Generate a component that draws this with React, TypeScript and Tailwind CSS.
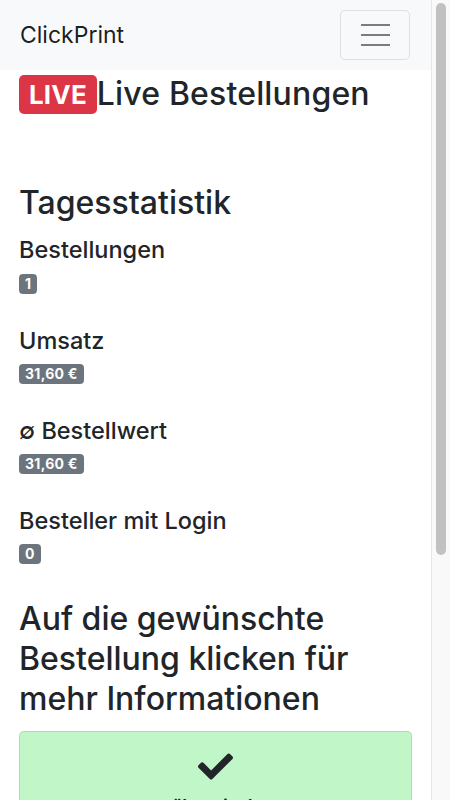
import { FaCheck } from 'react-icons/fa'

// Daily stats shown under "Tagesstatistik"
const stats = [
    { label: 'Bestellungen', value: '1' },
    { label: 'Umsatz', value: '31,60 €' },
    { label: '∅ Bestellwert', value: '31,60 €' },
    { label: 'Besteller mit Login', value: '0' },
]

function Badge({ children }: { children: React.ReactNode }) {
    return (
        <span className="inline-flex items-center h-[20px] px-[6px] rounded-[4px] bg-[#6c757d] text-white text-[14px] tracking-[0.02em] font-bold leading-none">
            {children}
        </span>
    )
}

export default function App() {
    return (
        <div className="h-[800px] flex overflow-hidden bg-white text-[#212529] font-['Inter','Noto_Sans',sans-serif]">
            <div className="flex-1 min-w-0">
                {/* Navbar */}
                <nav className="h-[70px] bg-[#f8f9fa] flex items-center justify-between pl-[20px] pr-[21px]">
                    <span className="text-[23px] leading-none text-[rgba(0,0,0,0.9)]">ClickPrint</span>
                    <button className="w-[70px] h-[50px] border border-[rgba(0,0,0,0.1)] rounded-[5px] flex flex-col items-center justify-center gap-[8px]">
                        <span className="block w-[29px] h-[2px] bg-[rgba(0,0,0,0.5)]" />
                        <span className="block w-[29px] h-[2px] bg-[rgba(0,0,0,0.5)]" />
                        <span className="block w-[29px] h-[2px] bg-[rgba(0,0,0,0.5)]" />
                    </button>
                </nav>

                <main className="px-[19px]">
                    {/* Title */}
                    <h1 className="mt-[5px] flex items-center text-[32px] leading-[1.2] font-medium tracking-[0.005em]">
                        <span className="inline-flex items-center h-[39px] px-[10px] rounded-[5px] bg-[#dc3545] text-white text-[26px] font-bold leading-none">
                            LIVE
                        </span>
                        Live Bestellungen
                    </h1>

                    <h2 className="mt-[70px] text-[32px] leading-[1.2] font-medium">Tagesstatistik</h2>

                    <div className="mt-[14px] flex flex-col gap-[33px]">
                        {stats.map((s) => (
                            <div key={s.label} className="flex flex-col items-start">
                                <h4 className="text-[23.5px] leading-[1.2] font-medium">{s.label}</h4>
                                <div className="mt-[9px] flex">
                                    <Badge>{s.value}</Badge>
                                </div>
                            </div>
                        ))}
                    </div>

                    <h2 className="mt-[35px] text-[32px] leading-[40px] font-medium">
                        Auf die gewünschte Bestellung klicken für mehr Informationen
                    </h2>

                    {/* Order card */}
                    <div className="mt-[12px] bg-[#c0f6c8] border border-[rgba(0,0,0,0.1)] rounded-[5px] pt-[17px] pb-[20px] flex flex-col items-center">
                        <FaCheck className="w-[35px] h-[35px] text-[#212529]" />
                        <span className="mt-[9px] text-[16px] leading-[24px] font-bold">übermittelt</span>
                    </div>
                </main>
            </div>

            {/* Scrollbar track */}
            <div className="w-[19px] shrink-0 bg-[#f9f9f9] border-l border-[#e6e6e6]">
                <div className="mx-auto mt-[3px] w-[10px] h-[552px] rounded-full bg-[#c1c1c1]" />
            </div>
        </div>
    )
}
